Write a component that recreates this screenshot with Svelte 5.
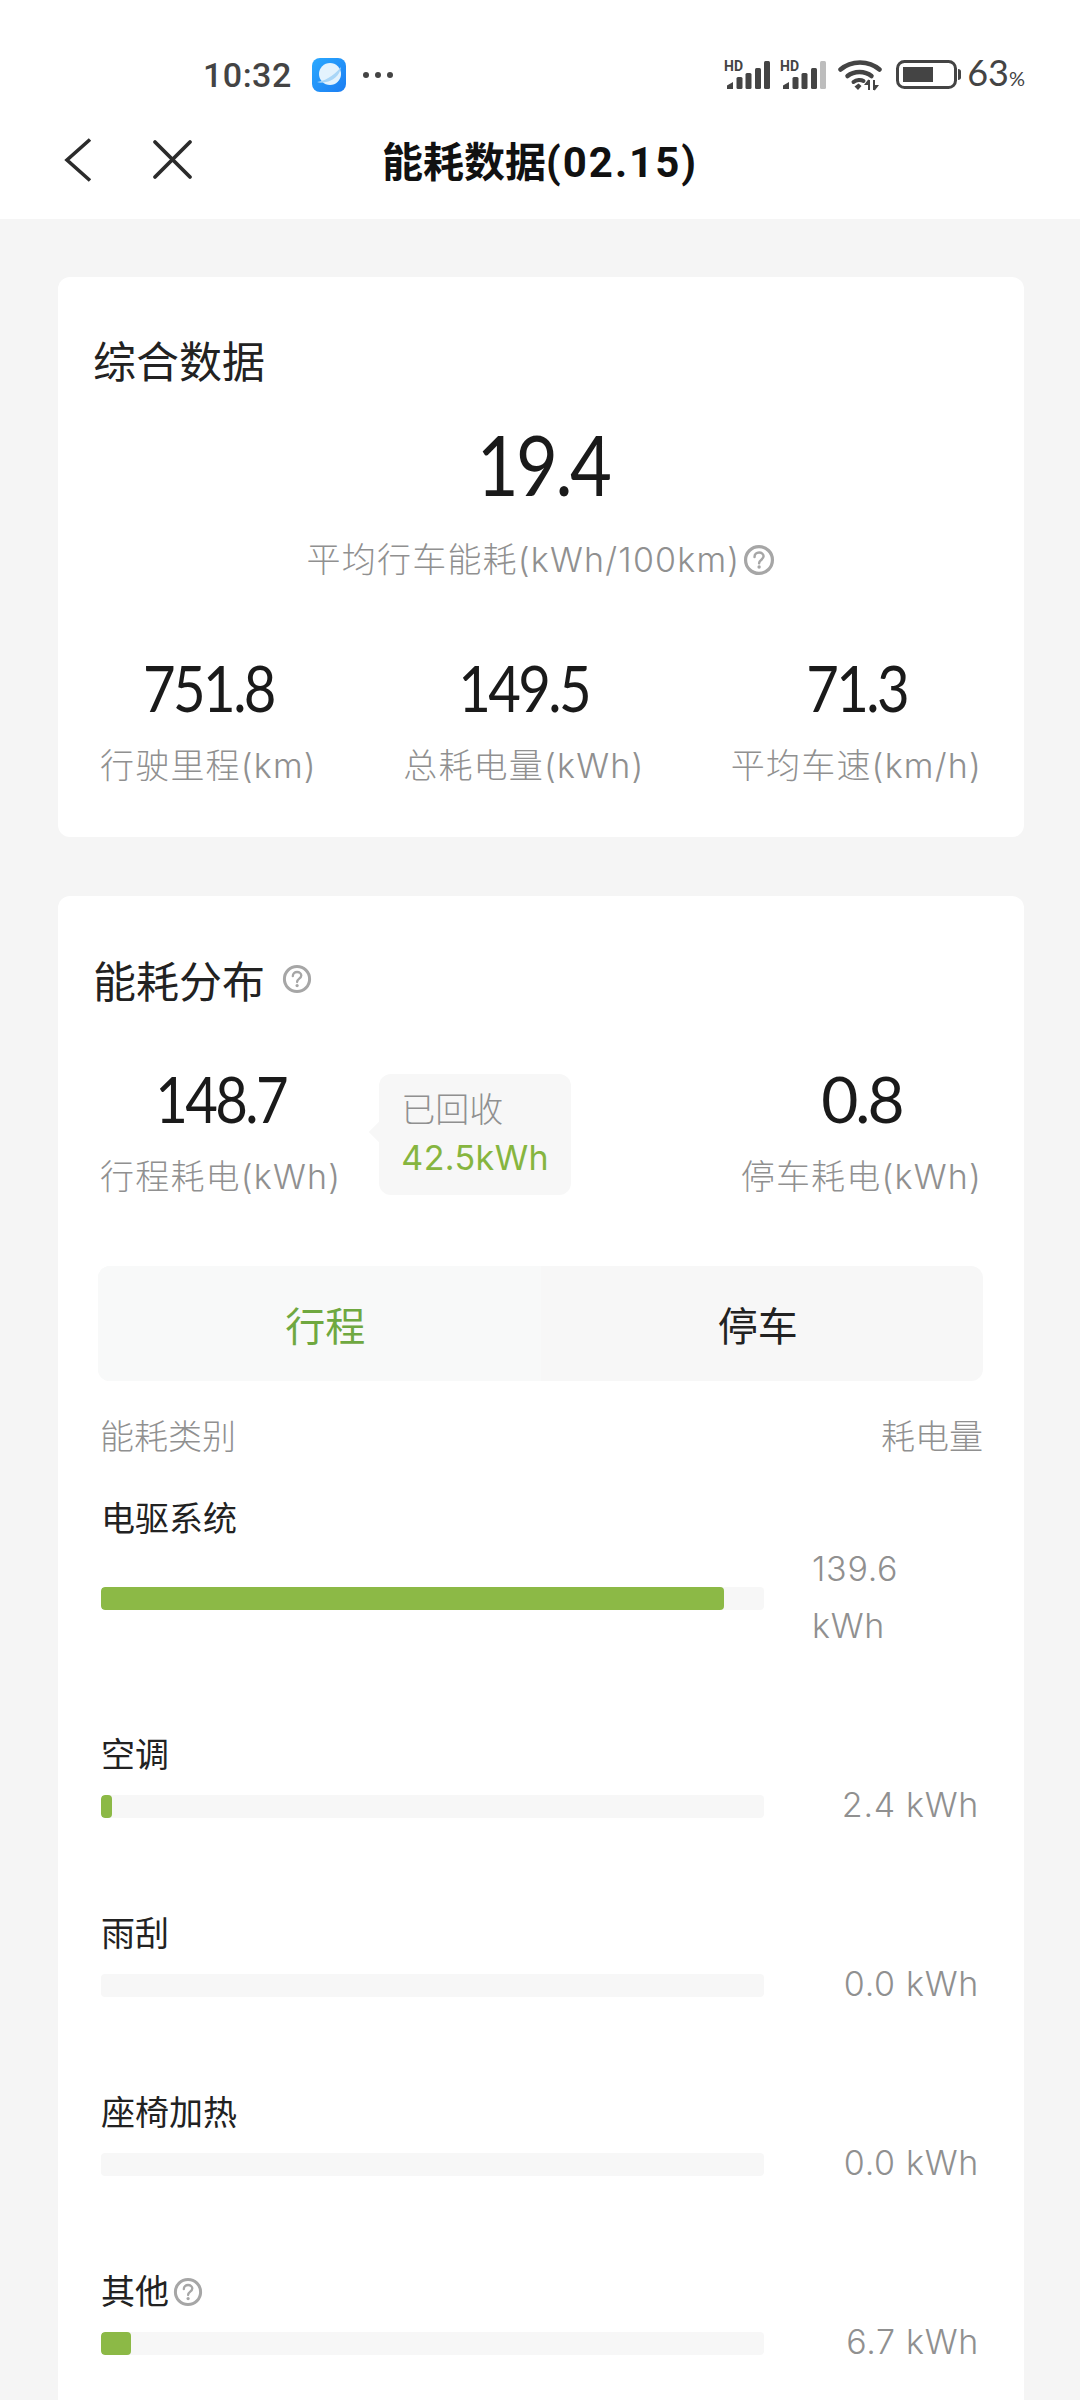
<script>
  const rows = [
    { name: '电驱系统', pct: 94, value: ['139.6', 'kWh'], wrap: true },
    { name: '空调', pct: 1.6, value: ['2.4 kWh'] },
    { name: '雨刮', pct: 0, value: ['0.0 kWh'] },
    { name: '座椅加热', pct: 0, value: ['0.0 kWh'] },
    { name: '其他', pct: 4.5, value: ['6.7 kWh'], help: true }
  ];
  const stats = [
    { n: '751.8', l: '行驶里程(km)' },
    { n: '149.5', l: '总耗电量(kWh)' },
    { n: '71.3', l: '平均车速(km/h)' }
  ];
</script>

{#snippet help(size)}
  <svg class="help" width={size} height={size} viewBox="0 0 30 30" fill="none" stroke="#a6a6a6">
    <circle cx="15" cy="15" r="12.6" stroke-width="3" />
    <path d="M10.8 12.2c0-2.600 1.900-4.200 4.300-4.200s4.200 1.500 4.200 3.600c0 3-4.200 3.200-4.200 6.400" stroke-width="2.300" stroke-linecap="round" />
    <circle cx="15.100" cy="21.600" r="1.600" fill="#a6a6a6" stroke="none" />
  </svg>
{/snippet}

{#snippet signal(lastColor)}
  <svg class="signal" width="48" height="32" viewBox="0 0 48 32">
    <text x="0" y="12" class="hd">HD</text>
    <path d="M3 30v-3.500l6-3.500v7z" fill="#444" />
    <rect x="12.500" y="18" width="6" height="12" rx="1.500" fill="#444" />
    <rect x="21.500" y="14" width="6" height="16" rx="1.500" fill="#444" />
    <rect x="31" y="9" width="6" height="21" rx="1.500" fill="#444" />
    <rect x="40" y="2" width="6" height="28" rx="1.500" fill={lastColor} />
  </svg>
{/snippet}

<div class="page">
  <header class="header">
    <div class="status">
      <span class="time">10:32</span>
      <svg class="app" width="34" height="34" viewBox="0 0 34 34">
        <defs>
          <linearGradient id="appg" x1="0" y1="0" x2="1" y2="1">
            <stop offset="0" stop-color="#2aa9ff" />
            <stop offset="1" stop-color="#1c7df2" />
          </linearGradient>
        </defs>
        <rect width="34" height="34" rx="8" fill="url(#appg)" />
        <circle cx="18" cy="16" r="11" fill="#e4f3fd" />
        <path d="M5 24c6-.5 16-5 24-15-1 9-9 14-15 15-4 1-7 1-9 0z" fill="#a9d6f7" />
      </svg>
      <span class="dots"><i></i><i></i><i></i></span>
      <div class="status-right">
        {@render signal('#444')}
        {@render signal('#bdbdbd')}
        <svg class="wifi" width="44" height="32" viewBox="0 0 44 32" fill="none" stroke="#444" stroke-linecap="round">
          <path d="M2.500 10.500C13 1 31 1 41.500 10.500" stroke-width="4.500" />
          <path d="M9.500 17C16 11.500 27 11.500 33.500 17" stroke-width="4.500" />
          <path d="M15.500 23C18.500 20.500 23 20.500 25.500 22" stroke-width="4" />
          <path d="M16.500 27.500l4-3 3 2.500-3.500 4z" fill="#444" stroke="none" />
          <path d="M31 21v10M31 21l-3 4h3M36 31V21M36 31l3-4h-3" stroke-width="2" stroke-linecap="butt" />
        </svg>
        <svg class="battery" width="66" height="30" viewBox="0 0 66 30" fill="none">
          <rect x="1.500" y="1.500" width="58" height="26" rx="7" stroke="#444" stroke-width="3" />
          <rect x="7" y="7" width="30" height="15" fill="#444" />
          <path d="M62 9c2 0 3 1 3 2.500v6c0 1.500-1 2.500-3 2.500z" fill="#444" />
        </svg>
        <span class="pct">63<small>%</small></span>
      </div>
    </div>
    <nav class="nav">
      <svg class="back" width="28" height="44" viewBox="0 0 28 44" fill="none" stroke="#2b2b2b" stroke-width="3.600">
        <path d="M26 1.500L3 22l23 20.500" />
      </svg>
      <svg class="close" width="42" height="42" viewBox="0 0 42 42" fill="none" stroke="#2b2b2b" stroke-width="3.800" stroke-linecap="round">
        <path d="M3 3l35 35M38 3L3 38" />
      </svg>
      <h1 class="title">能耗数据<span class="date">(02.15)</span></h1>
    </nav>
  </header>

  <section class="card first">
    <h2 class="card-title">综合数据</h2>
    <div class="big num">19.4</div>
    <div class="big-label">平均行车能耗(kWh/100km){@render help(32)}</div>
    <div class="stats">
      {#each stats as s}
        <div class="stat">
          <div class="mid num">{s.n}</div>
          <div class="label">{s.l}</div>
        </div>
      {/each}
    </div>
  </section>

  <section class="card second">
    <h2 class="card-title">能耗分布 {@render help(30)}</h2>
    <div class="summary">
      <div class="stat">
        <div class="mid num">148.7</div>
        <div class="label">行程耗电(kWh)</div>
      </div>
      <div class="tip">
        <div>已回收</div>
        <div class="tip-val">42.5kWh</div>
      </div>
      <div class="stat right">
        <div class="mid num wide">0.8</div>
        <div class="label">停车耗电(kWh)</div>
      </div>
    </div>
    <div class="tabs">
      <div class="tab on">行程</div>
      <div class="tab off">停车</div>
    </div>
    <div class="head"><span>能耗类别</span><span>耗电量</span></div>
    <div class="rows">
      {#each rows as r}
        <div class="row" class:tall={r.wrap}>
          <div class="row-name">{r.name}{#if r.help}{@render help(30)}{/if}</div>
          <div class="row-line">
            <div class="track"><div class="fill" style="width:{r.pct}%"></div></div>
            <div class="value" class:wrap={r.wrap}>
              {#each r.value as v}<div>{v}</div>{/each}
            </div>
          </div>
        </div>
      {/each}
    </div>
  </section>
</div>

<style>
  :global(body) { margin: 0; background: #f5f5f5; }
  .page {
    height: 2400px;
    overflow: hidden;
    background: #f5f5f5;
    font-family: Inter, "Noto Sans CJK SC", sans-serif;
    font-weight: 300;
    color: #222;
  }
  .header { background: #fff; height: 219px; }
  .status {
    height: 100px;
    padding: 50px 55px 0 203px;
    box-sizing: border-box;
    display: flex;
    align-items: center;
  }
  .time { font: 500 34px/50px Roboto, sans-serif; color: #444; letter-spacing: 0.5px; }
  .app { margin-left: 20px; }
  .dots { display: flex; gap: 6px; margin-left: 17px; }
  .dots i { width: 6px; height: 6px; border-radius: 50%; background: #444; }
  .status-right { margin-left: auto; display: flex; align-items: center; }
  .signal { margin-right: 8px; }
  .hd { font: 700 14px Roboto, sans-serif; fill: #444; }
  .wifi { margin-left: 2px; }
  .battery { margin-left: 14px; }
  .pct { font: 400 36px/40px Lato, sans-serif; color: #444; margin-left: 5px; }
  .pct small { font-size: 20px; }
  .nav { height: 119px; position: relative; display: flex; align-items: center; }
  .back { margin-left: 64px; }
  .close { margin-left: 60px; }
  .title {
    position: absolute; left: 382px; top: 0; margin: 0;
    font: 700 41px/119px "Noto Sans CJK SC", sans-serif; color: #111;
    white-space: nowrap;
  }
  .date { font-family: Roboto, sans-serif; font-size: 42px; letter-spacing: 2px; }
  .card {
    background: #fff;
    margin: 58px 56px 0 58px;
    border-radius: 12px;
    box-sizing: border-box;
  }
  .first { height: 560px; padding-top: 52px; }
  .second { margin-top: 59px; padding-top: 53px; }
  .card-title {
    margin: 0 0 0 35px;
    font: 400 43px/60px "Noto Sans CJK SC", sans-serif;
    color: #222;
    display: flex; align-items: center; gap: 17px;
  }
  .num { font-family: Lato, Roboto, sans-serif; font-weight: 400; color: #1a1a1a; letter-spacing: -3px; }
  .big { font-size: 84px; line-height: 100px; text-align: center; margin-top: 25px; margin-left: 4px; transform: scaleX(0.86); }
  .big-label {
    display: flex; justify-content: center; align-items: center; gap: 3px;
    font-size: 34px; line-height: 48px; color: #909090; margin-top: 22px;
    letter-spacing: 1.2px;
  }
  .stats { display: flex; justify-content: space-between; padding: 0 42px; margin-top: 64px; }
  .stat { text-align: center; }
  .mid { font-size: 64px; line-height: 80px; transform: scaleX(0.88); }
  .mid.wide { transform: none; }
  .label { font-size: 34px; line-height: 48px; color: #909090; margin-top: 14px; letter-spacing: 1.2px; }
  .summary { display: flex; padding: 0 42px; margin-top: 50px; }
  .right { margin-left: auto; }
  .tip {
    position: relative;
    margin: 15px 0 0 38px;
    width: 192px; height: 121px;
    box-sizing: border-box;
    padding: 12px 0 0 22px;
    background: #f7f7f7;
    border-radius: 12px;
    font-size: 34px; line-height: 48px; color: #909090;
  }
  .tip::before {
    content: ""; position: absolute; left: -7px; top: 50px;
    width: 16px; height: 16px; background: #f7f7f7; transform: rotate(45deg);
  }
  .tip-val { color: #86b53f; font-size: 34px; letter-spacing: 0.4px; font-weight: 400; }
  .tabs {
    display: grid; grid-template-columns: 1fr 1fr;
    margin: 65px 41px 0 40px;
    height: 115px;
    background: #f7f7f7;
    border-radius: 12px;
    overflow: hidden;
  }
  .tab { display: flex; align-items: center; justify-content: center; font-size: 40px; font-weight: 400; color: #222; }
  .tab.on { color: #6fa840; background: #f8f9f9; padding-left: 12px; }
  .tab.off { padding-right: 8px; }
  .head {
    display: flex; justify-content: space-between;
    margin: 32px 41px 0 42px;
    font-size: 34px; line-height: 48px; color: #909090;
  }
  .rows { margin: 34px 41px 0 43px; }
  .row { height: 179px; }
  .row.tall { height: 236px; }
  .row-name {
    font-size: 34px; font-weight: 400; line-height: 48px; color: #222;
    display: flex; align-items: center; gap: 4px;
  }
  .row-line { display: flex; align-items: center; }
  .track { width: 663px; height: 23px; background: #f7f7f7; border-radius: 4px; overflow: hidden; flex: none; }
  .fill { height: 100%; background: #8cb946; border-radius: 4px; }
  .value {
    margin-left: auto;
    margin-right: 4px;
    margin-top: -3px;
    font-size: 34px; line-height: 57px; color: #909090;
    letter-spacing: 0.7px;
  }
  .value.wrap { width: 167px; }
</style>
